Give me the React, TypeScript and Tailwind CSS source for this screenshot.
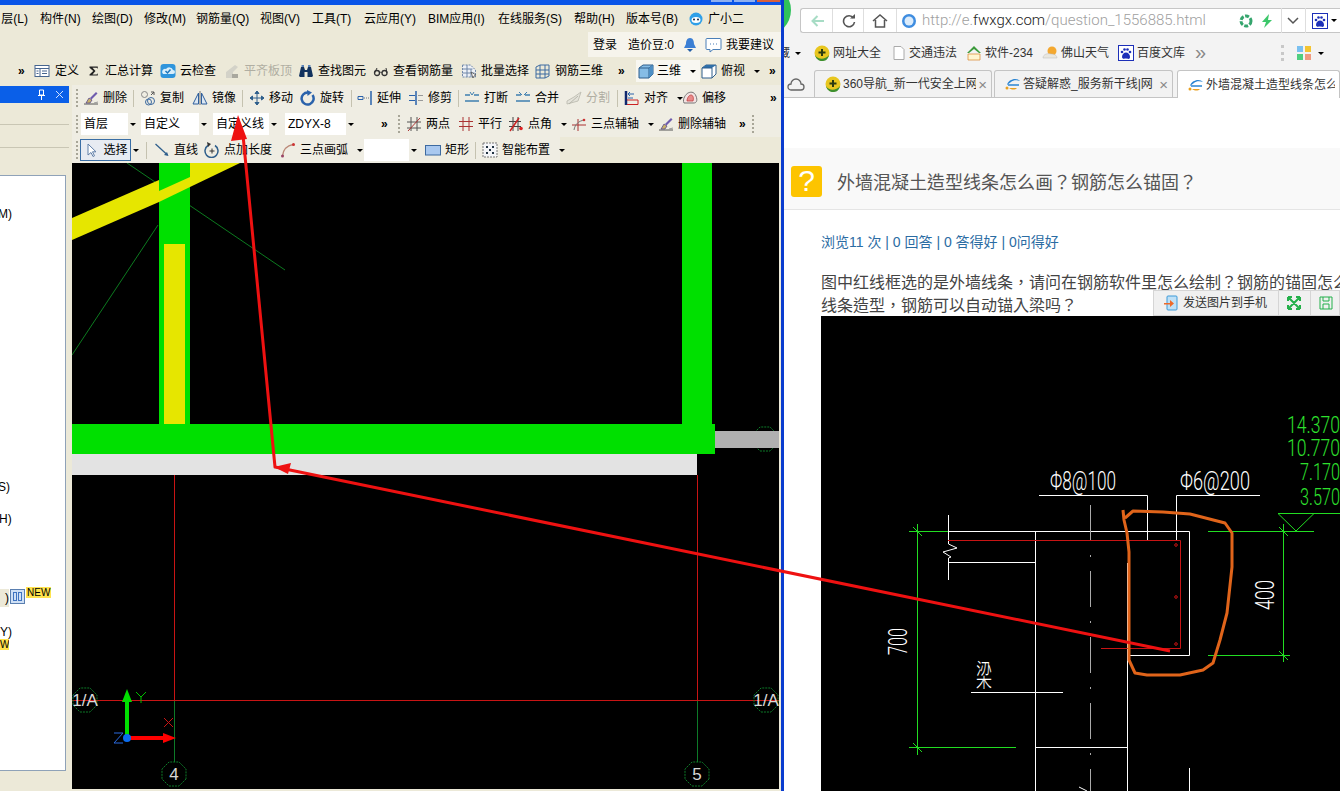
import React from "react";

const Ico = ({ children, size = 16 }: { children: React.ReactNode; size?: number }) => (
  <svg width={size} height={size} viewBox="0 0 16 16" fill="none" className="shrink-0">
    {children}
  </svg>
);

const Caret = ({ className = "" }: { className?: string }) => (
  <span className={`inline-block w-0 h-0 shrink-0 border-x-[3px] border-x-transparent border-t-[3px] border-t-black ${className}`}></span>
);

const More = ({ className = "" }: { className?: string }) => (
  <span className={`shrink-0 text-[12px] leading-none font-bold text-black ${className}`}>»</span>
);

const Grip = ({ className = "" }: { className?: string }) => (
  <span className={`shrink-0 w-[2px] h-[18px] border-l-2 border-dotted border-[#a8a698] ${className}`}></span>
);

const Sep = ({ className = "" }: { className?: string }) => (
  <span className={`shrink-0 w-px h-[17px] bg-[#c5c2b0] ${className}`}></span>
);

type ToolProps = {
  className: string;
  icon?: React.ReactNode;
  label: string;
  off?: boolean;
  caret?: boolean;
};

const Tool = ({ className, icon, label, off, caret }: ToolProps) => (
  <div className={`flex items-center shrink-0 gap-[4px] ${className}`}>
    {icon}
    <span className={off ? "text-[#b0aea2]" : "text-black"}>{label}</span>
    {caret && <Caret className="ml-[5px]" />}
  </div>
);

const Combo = ({ className, label }: { className: string; label: string }) => (
  <div className={`flex items-center justify-between shrink-0 h-[22px] ${className}`}>
    <span className="flex-1 h-full bg-white pl-[3px] flex items-center">{label}</span>
    <span className="w-[10px] flex justify-center">
      <Caret />
    </span>
  </div>
);

const icons = {
  define: (
    <Ico>
      <rect x="1" y="2.5" width="14" height="11" fill="#fff" stroke="#46658f" />
      <path d="M1 5.5h14M6 5.5v8M2.5 8h2M2.5 10.500h2M8 8h5M8 10.500h5" stroke="#46658f" />
    </Ico>
  ),
  sigma: (
    <Ico size={12}>
      <path d="M2 2h11v3L11.500 3.500H6l4 4.500-4 4.500h5.500L13 11v3H2v-1.500L7 8 2 3.500z" fill="#222" />
    </Ico>
  ),
  cloud: (
    <Ico>
      <rect x="0.500" y="1" width="15" height="14" rx="3" fill="#2f95dc" />
      <path d="M3 11h10a2 2 0 0 0 0-4 4 4 0 0 0-7-1 3 3 0 0 0-3 5z" fill="#d8eefb" />
      <path d="M5.500 8l2 2 3-3.500" stroke="#1f78bd" strokeWidth="1.500" />
    </Ico>
  ),
  flatTop: (
    <Ico>
      <path d="M2 15V9l9-7 3 2-5 5v6z" fill="#d3d2c8" />
      <path d="M8 15v-4h6v4z" fill="#a9a89e" />
    </Ico>
  ),
  binocular: (
    <Ico>
      <path d="M1 13l2-9h3l1 3h2l1-3h3l2 9-1 1H9.500V9h-3v5H2z" fill="#12325e" />
      <rect x="3.500" y="2" width="2.500" height="2" fill="#5a83b8" />
      <rect x="10" y="2" width="2.500" height="2" fill="#5a83b8" />
    </Ico>
  ),
  glasses: (
    <Ico>
      <circle cx="4" cy="10" r="2.500" stroke="#333" strokeWidth="1.300" />
      <circle cx="11.500" cy="10" r="2.500" stroke="#333" strokeWidth="1.300" />
      <path d="M6.500 10c1-1 1.500-1 2.500 0M1.500 10L4 5M14 10l-1-5" stroke="#333" />
    </Ico>
  ),
  batch: (
    <Ico>
      <path d="M1.500 2h8l5 5v7h-13z" fill="#eef1f6" stroke="#6f86a8" strokeDasharray="2 1" />
      <path d="M1.500 6h10M1.500 10h12M6 2v12M10 6v8" stroke="#6f86a8" />
      <path d="M10 9l5 3-2 1-1 2z" fill="#f4f4f4" stroke="#444" strokeWidth="0.700" />
    </Ico>
  ),
  rebar3d: (
    <Ico>
      <path d="M1 4l4-2h9v11l-4 2H1z" stroke="#3d6aa0" />
      <path d="M1 7h13M1 11h13M5 2v13M10 2v13" stroke="#3d6aa0" />
    </Ico>
  ),
  cube: (
    <Ico>
      <path d="M1 5l4-3h10v9l-4 4H1z" fill="#86bde6" stroke="#2f5f8c" />
      <path d="M1 5h10v10M11 5l4-3" stroke="#2f5f8c" />
      <path d="M11 5l4-3v9l-4 4z" fill="#4e8fc4" />
    </Ico>
  ),
  topView: (
    <Ico>
      <path d="M1 5l4-3h10v9l-4 4H1z" fill="#fff" stroke="#2f5f8c" />
      <path d="M1 5l4-3h10l-4 3z" fill="#2f6fa8" />
      <path d="M11 5v10M11 5H1" stroke="#2f5f8c" />
    </Ico>
  ),
  erase: (
    <Ico>
      <path d="M1 14h14" stroke="#555" />
      <path d="M3 13l3-5 3 2-2 3z" fill="#c9b26a" stroke="#4a3a8a" strokeWidth="0.700" />
      <path d="M7 8l6-6 1.500 1.500-6 6z" fill="#6f5cae" />
      <path d="M11 13l4-1" stroke="#999" />
    </Ico>
  ),
  copy: (
    <Ico>
      <circle cx="4.500" cy="4.500" r="3" stroke="#888" />
      <circle cx="11" cy="11" r="3.500" stroke="#3d6aa0" />
      <circle cx="8.500" cy="12" r="3" stroke="#3d6aa0" />
      <path d="M11 2l3 0v3M14 2l-3 3" stroke="#555" />
    </Ico>
  ),
  mirror: (
    <Ico>
      <path d="M8 1v14" stroke="#777" />
      <path d="M6.500 3v11H1zM9.500 3v11H15z" fill="#dce7f3" stroke="#2f5f9c" />
    </Ico>
  ),
  move: (
    <Ico>
      <path d="M8 1v14M1 8h14M8 1L6 3.500h4zM8 15l-2-2.500h4zM1 8l2.500-2v4zM15 8l-2.500-2v4z" stroke="#2f5f8c" fill="#2f5f8c" />
    </Ico>
  ),
  rotate: (
    <Ico>
      <path d="M12.500 5A6 6 0 1 1 8 2.500" stroke="#2a62ab" strokeWidth="2.500" />
      <path d="M7 0l5 2.500L7.500 6z" fill="#2a62ab" />
    </Ico>
  ),
  extend: (
    <Ico>
      <path d="M14 1v14" stroke="#2a62ab" strokeWidth="1.500" />
      <path d="M1 6.500h5v3H1z" stroke="#2a62ab" />
      <path d="M7 8h6" stroke="#777" strokeDasharray="1 1" />
    </Ico>
  ),
  trim: (
    <Ico>
      <path d="M8 1v14" stroke="#2a62ab" strokeWidth="1.500" />
      <path d="M1 5.500h6M1 10.500h6" stroke="#2a62ab" />
      <path d="M10 5.500h5M10 10.500h5" stroke="#999" />
    </Ico>
  ),
  split: (
    <Ico>
      <path d="M1 5h5M10 5h5M1 11h14" stroke="#3f7fb0" strokeWidth="1.500" />
      <path d="M6 2l2 3 2-3" stroke="#3f7fb0" />
    </Ico>
  ),
  merge: (
    <Ico>
      <path d="M1 5h5M10 5h5M1 11h14" stroke="#3f7fb0" strokeWidth="1.500" />
      <path d="M4 2l3 3M12 2L9 5" stroke="#3f7fb0" />
    </Ico>
  ),
  cut: (
    <Ico>
      <path d="M1 14l11-3 3-9-7 5-7 4z" stroke="#c2c1b6" fill="#e4e3da" />
      <path d="M3 14l9-8" stroke="#b8b7ac" />
    </Ico>
  ),
  align: (
    <Ico>
      <path d="M2 1v14" stroke="#10286e" strokeWidth="2.500" />
      <path d="M3 14.500h11V10H3" stroke="#c22" />
      <path d="M10 4H4l2-2M4 4l2 2M4 8h5" stroke="#2a62ab" />
    </Ico>
  ),
  offset: (
    <Ico>
      <path d="M2 13c-2-4 2-9 4-10s6-2 8 3 0 7-2 7z" fill="#f2e2e2" stroke="#777" />
      <path d="M5 11c0-3 2-6 4-6s3 3 2 6z" fill="#e88a8a" stroke="#b33" strokeWidth="0.700" />
    </Ico>
  ),
  twoPoint: (
    <Ico>
      <path d="M1 6h14M1 12h14" stroke="#555" />
      <path d="M5 1v14M11 1v14" stroke="#555" />
      <path d="M2 15L14 2" stroke="#a33" />
    </Ico>
  ),
  parallel: (
    <Ico>
      <path d="M1 5.500h14M1 10.500h14M5 1v14M11 1v14" stroke="#a33" />
    </Ico>
  ),
  angle: (
    <Ico>
      <path d="M1 5.500h12M1 10.500h12M5 1v14M10 1v14" stroke="#444" />
      <path d="M2 15L11 2" stroke="#c22" strokeWidth="1.500" />
      <circle cx="13" cy="12.500" r="1.800" fill="#d22" />
    </Ico>
  ),
  threePoint: (
    <Ico>
      <path d="M1 9h14M7 3v12" stroke="#a33" />
      <path d="M3 14c1-6 5-9 10-10" stroke="#777" />
      <circle cx="13" cy="4" r="1.300" fill="#c33" />
    </Ico>
  ),
  select: (
    <Ico>
      <path d="M5 2v11l3-2.500 2 4 1.500-.7-2-4H13z" fill="#fff" stroke="#5f7ea8" />
    </Ico>
  ),
  line: (
    <Ico>
      <path d="M1.500 2l12 11" stroke="#2f5f8c" strokeWidth="1.300" />
      <path d="M14.500 14L10 13l3-3z" fill="#2f5f8c" />
    </Ico>
  ),
  pointLength: (
    <Ico>
      <path d="M4 3.500a6.500 6.500 0 1 0 7 0" stroke="#2f5f8c" strokeWidth="1.500" />
      <path d="M3 0l4 2-3 3z" fill="#333" />
      <path d="M8 6.500v5M5.500 9h5" stroke="#333" />
    </Ico>
  ),
  arc: (
    <Ico>
      <path d="M2.500 14C3 8 7 3.500 13 2.500" stroke="#b87" strokeWidth="1.500" />
      <circle cx="2.500" cy="14" r="1.500" fill="#946" />
      <circle cx="13.500" cy="2.500" r="1.500" fill="#c33" />
    </Ico>
  ),
  rect: (
    <Ico>
      <rect x="0.500" y="3.500" width="15" height="9.500" fill="#a9c8ef" stroke="#3d6aa0" />
    </Ico>
  ),
  smart: (
    <Ico>
      <rect x="1" y="1" width="14" height="14" fill="#f4f5f8" stroke="#777" strokeDasharray="2 1" />
      <path d="M4 4h2v2H4zM10 4h2v2h-2zM7 7h2v2H7zM4 10h2v2H4zM10 10h2v2h-2z" fill="#234" />
    </Ico>
  ),
};

const Bao = ({ size = 16 }: { size?: number }) => (
  <Ico size={size}>
    <rect x="0.500" y="0.500" width="15" height="15" fill="#fff" stroke="#1d2fb8" />
    <path d="M4 12c0-3 2-4.500 4-4.500s4 1.500 4 4.500-3 1.500-4 1.500-4 1-4-1.500z" fill="#1d2fb8" />
    <circle cx="4" cy="7" r="1.300" fill="#1d2fb8" />
    <circle cx="6.500" cy="4.500" r="1.300" fill="#1d2fb8" />
    <circle cx="9.500" cy="4.500" r="1.300" fill="#1d2fb8" />
    <circle cx="12" cy="7" r="1.300" fill="#1d2fb8" />
  </Ico>
);

const Nav360 = () => (
  <Ico>
    <circle cx="8" cy="8" r="7.500" fill="#e8c61f" />
    <path d="M1 10c3 5 10 5 14 0-1 5-4 6-7 6s-6-2-7-6z" fill="#3d8f2e" />
    <path d="M8 4v7M4.500 7.500h7" stroke="#2a3a10" strokeWidth="2" />
  </Ico>
);

const Ie = () => (
  <Ico>
    <path d="M2 9c1-6 10-8 13-4-3-1-7-1-9 1z" fill="#2a84d2" />
    <path d="M4 12h8c-2 2-5 2-8 0z" fill="#e8a020" />
    <path d="M3 9h11" stroke="#2a84d2" strokeWidth="1.500" />
    <circle cx="2" cy="12" r="1.500" fill="#e8a020" />
  </Ico>
);

const Bookmark = ({ className, icon, label }: { className: string; icon: React.ReactNode; label: string }) => (
  <div className={`flex items-center shrink-0 gap-[3px] ${className}`}>
    {icon}
    <span>{label}</span>
  </div>
);

const Tab = ({ className, label, active }: { className: string; label: string; active?: boolean }) => (
  <div
    className={`flex items-center shrink-0 pl-[10px] pr-[4px] gap-[2px] border border-b-0 border-[#c4c4c4] rounded-t-[3px] overflow-hidden ${
      active ? "bg-white h-[28px]" : "bg-[#f2f2f2] h-[27px]"
    } ${className}`}
  >
    {label.startsWith("360") ? <Nav360 /> : <Ie />}
    <span className="flex-1 overflow-hidden leading-[16px] text-[#333]">{label}</span>
    {!active && <span className="text-[#888] text-[15px] leading-none">×</span>}
  </div>
);

const Bubble = ({ x, y, label, size = 17 }: { x: number; y: number; label: string; size?: number }) => {
  const pts = Array.from({ length: 8 }, (_, i) => {
    const a = (Math.PI / 4) * i + Math.PI / 8;
    return `${x + 13 * Math.cos(a)},${y + 13 * Math.sin(a)}`;
  }).join(" ");
  return (
    <g>
      <polygon points={pts} stroke="#0d7a28" fill="none" strokeWidth="1" strokeDasharray="2 1" />
      <text x={x} y={y + 6} textAnchor="middle" fontSize={size} fill="#d8d8d8" fontFamily="Liberation Sans">
        {label}
      </text>
    </g>
  );
};

const CadLeft = () => (
  <svg className="block w-full h-full" viewBox="72 163 707 626">
    <rect x="72" y="163" width="707" height="626" fill="#000" />
    <path d="M127 163L285 270M158 225L72 355" stroke="#0c7a1f" strokeWidth="1" />
    <rect x="159" y="163" width="31" height="261" fill="#00e000" />
    <polygon points="72,218 159,180 159,202 72,240" fill="#e6e600" />
    <polygon points="159,191 190,177 190,187 159,202" fill="#e6e600" />
    <polygon points="190,163 240,163 190,187" fill="#e6e600" />
    <rect x="164" y="244" width="21" height="180" fill="#e6e600" />
    <rect x="682" y="163" width="30" height="261" fill="#00e000" />
    <rect x="72" y="424" width="643" height="30" fill="#00e000" />
    <Bubble x={765} y={439} label="" />
    <rect x="715" y="431" width="64" height="17" fill="#b0b0b0" />
    <rect x="72" y="454" width="625" height="21" fill="#e3e3e3" />
    <path d="M174.500 475V700M697.500 475V700M72 700.500H779" stroke="#c81414" strokeWidth="1" />
    <path d="M174.500 701V762M697.500 701V762" stroke="#0d7a28" strokeWidth="1" />
    <Bubble x={85} y={700} label="1/A" />
    <Bubble x={766} y={700} label="1/A" />
    <Bubble x={174} y={774} label="4" />
    <Bubble x={697} y={774} label="5" />
    <path d="M127 737V700" stroke="#00e000" strokeWidth="4" />
    <polygon points="127,689 122,702 132,702" fill="#00e000" />
    <path d="M127 738H165" stroke="#f00" strokeWidth="4" />
    <polygon points="176,738 163,733 163,743" fill="#f00" />
    <circle cx="127" cy="738" r="4" fill="#0a6cf0" />
    <path d="M136 692l5 5 5-5M141 697v6" stroke="#00c000" />
    <path d="M164 718l9 9M173 718l-9 9" stroke="#c81414" />
    <path d="M114 733h9l-9 10h9" stroke="#2a6ae0" />
  </svg>
);

const CadRight = () => (
  <svg className="block w-full h-full" viewBox="821 316 519 475">
    <rect x="821" y="316" width="519" height="475" fill="#000" />
    <g stroke="#fff" strokeWidth="1" fill="none">
      <path d="M1039 495.500H1147.500V541M1176.500 541V495.500H1260" />
      <path d="M948 531.500H1189.500V655.500H1130" />
      <path d="M948.500 515V544L957 548L943 552L951 557L948.500 558V580" />
      <path d="M948 562.500H1035" />
      <path d="M1035.500 531V791M1127.500 563V791" />
      <path d="M1035 747.500H1127M971 692.500H1063" />
      <path d="M1189.500 768V791" />
      <path d="M1079 787l8 4" />
    </g>
    <path d="M1090.500 505V791" stroke="#aaa" strokeDasharray="36 14 2 14" />
    <path d="M948 540.500H1180.500V648.500H1101" stroke="#c81414" fill="none" />
    <g stroke="#c81414" fill="none">
      <circle cx="1176" cy="545" r="1.300" />
      <circle cx="1176" cy="597" r="1.300" />
      <circle cx="1176" cy="644" r="1.300" />
    </g>
    <g stroke="#22dd22" strokeWidth="1" fill="none">
      <path d="M909 531.500H948M917.500 524V755M909 747.500H1016" />
      <path d="M1208 531.500H1314M1283.500 524V662M1208 655.500H1290" />
      <path d="M1340 513.500H1278L1296 531L1314 513.500" />
      <path d="M913 527l9 9M913 743l9 9M1279 527l9 9M1279 651l9 9" />
    </g>
    <g fill="#fff" fontFamily="Roboto" fontWeight="300" fontSize="26">
      <text x="1050" y="490" textLength="66" lengthAdjust="spacingAndGlyphs">Φ8@100</text>
      <text x="1180" y="490" textLength="70" lengthAdjust="spacingAndGlyphs">Φ6@200</text>
      <text transform="translate(907 655) rotate(-90)" textLength="27" lengthAdjust="spacingAndGlyphs">700</text>
      <text transform="translate(1274 610) rotate(-90)" textLength="30" lengthAdjust="spacingAndGlyphs">400</text>
      <text x="976" y="686" fontSize="30" fontFamily="Noto Sans CJK SC" fontWeight="200" textLength="16" lengthAdjust="spacingAndGlyphs">梁</text>
    </g>
    <g fill="#2ee02e" fontFamily="Roboto" fontWeight="300" fontSize="24">
      <text x="1287" y="433" textLength="53" lengthAdjust="spacingAndGlyphs">14.370</text>
      <text x="1287" y="456" textLength="53" lengthAdjust="spacingAndGlyphs">10.770</text>
      <text x="1300" y="480" textLength="40" lengthAdjust="spacingAndGlyphs">7.170</text>
      <text x="1300" y="505" textLength="40" lengthAdjust="spacingAndGlyphs">3.570</text>
    </g>
    <polyline
      points="1123,510 1124,520 1127,533 1129,552 1129,660 1135,673 1147,675 1180,675 1203,670 1213,663 1220,640 1227,613 1232,567 1232,533 1225,523 1190,514 1163,512 1133,511 1125,518"
      fill="none"
      stroke="#e0641a"
      strokeWidth="3"
      strokeLinejoin="round"
    />
  </svg>
);

export default function App() {
  return (
    <div className="relative flex w-[1340px] h-[791px] overflow-hidden bg-white text-[12px] leading-none whitespace-nowrap text-black font-['Liberation_Sans','Noto_Sans_CJK_SC',sans-serif]">
      {/* left: the CAD program */}
      <div className="relative z-10 flex flex-col w-[784px] h-full shrink-0 bg-[#ece9d8] border-r-[3px] border-[#0a3ccf]">
        <div className="flex justify-end gap-[2px] h-[5px] pr-[1px] bg-[#0a55e8]">
          <span className="w-[21px] h-[2px] bg-[#8fb0f0]"></span>
          <span className="w-[21px] h-[2px] bg-[#8fb0f0]"></span>
          <span className="w-[23px] h-[2px] bg-[#d8603c]"></span>
        </div>

        <div className="flex items-center h-[27px] gap-[12px] -ml-[12px] shrink-0">
          <span className="w-[40px] text-right">层(L)</span>
          <span className="w-[40px]">构件(N)</span>
          <span className="w-[40px]">绘图(D)</span>
          <span className="w-[40px]">修改(M)</span>
          <span className="w-[52px]">钢筋量(Q)</span>
          <span className="w-[40px]">视图(V)</span>
          <span className="w-[40px]">工具(T)</span>
          <span className="w-[52px]">云应用(Y)</span>
          <span className="w-[58px]">BIM应用(I)</span>
          <span className="w-[64px]">在线服务(S)</span>
          <span className="w-[40px]">帮助(H)</span>
          <span className="w-[52px]">版本号(B)</span>
          <div className="flex items-center gap-[4px] -ml-[2px]">
            <Ico>
              <circle cx="8" cy="8" r="6.500" fill="#2f9fe8" />
              <ellipse cx="8" cy="9" rx="4.500" ry="3" fill="#fff" />
              <circle cx="6" cy="8.500" r="1" fill="#124" />
              <circle cx="10" cy="8.500" r="1" fill="#124" />
            </Ico>
            <span>广小二</span>
          </div>
        </div>

        <div className="flex justify-end h-[25px] shrink-0">
          <div className="flex items-center w-[193px] bg-[#f6f4ec] pl-[5px]">
            <span>登录</span>
            <span className="ml-[11px]">造价豆:0</span>
            <svg width="14" height="16" viewBox="0 0 14 16" className="ml-[9px] shrink-0">
              <path d="M7 1c3 0 4 3 4 6l2 4H1l2-4c0-3 1-6 4-6z" fill="#3b7fd4" />
              <path d="M4 12h6l-3 3z" fill="#225ea8" />
            </svg>
            <svg width="17" height="16" viewBox="0 0 17 16" fill="none" className="ml-[8px] shrink-0">
              <path d="M2 1.500h13a1 1 0 0 1 1 1v9a1 1 0 0 1-1 1H8l-3 2.500v-2.500H2a1 1 0 0 1-1-1v-9a1 1 0 0 1 1-1z" stroke="#4a7fb8" fill="#fff" />
              <path d="M5 7h1M8 7h1M11 7h1" stroke="#4a7fb8" />
            </svg>
            <span className="ml-[4px]">我要建议</span>
          </div>
        </div>

        <div className="flex items-center h-[28px] pl-[18px] shrink-0">
          <More className="w-[16px]" />
          <Tool className="w-[54px] gap-[5px]" icon={icons.define} label="定义" />
          <Tool className="w-[72px] gap-[5px]" icon={icons.sigma} label="汇总计算" />
          <Tool className="w-[64px]" icon={icons.cloud} label="云检查" />
          <Tool className="w-[74px]" icon={icons.flatTop} label="平齐板顶" off />
          <Tool className="w-[75px]" icon={icons.binocular} label="查找图元" />
          <Tool className="w-[88px]" icon={icons.glasses} label="查看钢筋量" />
          <Tool className="w-[74px]" icon={icons.batch} label="批量选择" />
          <Tool className="w-[83px]" icon={icons.rebar3d} label="钢筋三维" />
          <More className="w-[18px]" />
          <div className="flex items-center w-[64px] h-[22px] shrink-0 bg-[#f8f7f1] pl-[2px] gap-[3px]">
            {icons.cube}
            <span>三维</span>
            <Caret className="ml-[6px]" />
          </div>
          <Tool className="w-[68px] ml-[1px]" icon={icons.topView} label="俯视" caret />
          <More />
        </div>

        <div className="flex flex-1 min-h-0">
          {/* side panel */}
          <div className="flex flex-col w-[72px] shrink-0 pr-[3px]">
            <div className="flex items-center justify-end gap-[9px] h-[17px] mt-[1px] pr-[5px] bg-[#0a5fe8] text-white">
              <svg width="9" height="11" viewBox="0 0 9 11" fill="none">
                <path d="M2.500 1h4v5h-4zM1 6.500h7M4.500 6.500V11" stroke="#fff" />
              </svg>
              <svg width="9" height="9" viewBox="0 0 9 9" fill="none">
                <path d="M1 1l7 7M8 1L1 8" stroke="#cfe0ff" />
              </svg>
            </div>
            <div className="h-[22px] border-b border-[#c9c6b4]"></div>
            <div className="h-[23px] border-b border-[#c9c6b4]"></div>
            <div className="h-[27px]"></div>
            <div className="flex flex-col w-[66px] h-[596px] bg-white border border-l-0 border-[#8fa2b8] overflow-hidden">
              <span className="h-4 mt-[32px] -ml-[2px]">M)</span>
              <span className="h-4 mt-[257px] -ml-[2px]">S)</span>
              <span className="h-4 mt-[16px] -ml-[1px]">H)</span>
              <div className="flex items-start h-[18px] mt-[60px]">
                <span className="w-[9px] pt-[3px] text-right bg-[#ece9d8] h-full">)</span>
                <span className="flex w-[15px] h-[15px] ml-[1px] bg-[#cfe0f5] border border-[#5a7fb0] p-[2px] gap-[1px]">
                  <i className="flex-1 border border-[#3f74c0]"></i>
                  <i className="flex-1 border border-[#3f74c0]"></i>
                </span>
                <span className="ml-[1px] -mt-[2px] px-[1px] h-[11px] bg-[#ffe34d] text-[10px] leading-[11px]">NEW</span>
              </div>
              <span className="h-[13px] mt-[19px]">Y)</span>
              <span className="w-[9px] h-[11px] bg-[#ffe34d] text-[10px] leading-[11px] overflow-hidden">W</span>
            </div>
          </div>

          {/* drawing toolbars and canvas */}
          <div className="flex flex-col flex-1 min-w-0">
            <div className="flex items-center h-[26px] pl-[4px] shrink-0 bg-[#efede3]">
              <Grip className="mr-[5px]" />
              <Tool className="w-[51px]" icon={icons.erase} label="删除" />
              <Sep className="-ml-[1px] mr-[6px]" />
              <Tool className="w-[52px]" icon={icons.copy} label="复制" />
              <Tool className="w-[50px]" icon={icons.mirror} label="镜像" />
              <Sep className="mr-[6px]" />
              <Tool className="w-[51px]" icon={icons.move} label="移动" />
              <Tool className="w-[51px]" icon={icons.rotate} label="旋转" />
              <Sep className="mr-[5px]" />
              <Tool className="w-[51px]" icon={icons.extend} label="延伸" />
              <Tool className="w-[50px]" icon={icons.trim} label="修剪" />
              <Sep className="mr-[5px]" />
              <Tool className="w-[51px]" icon={icons.split} label="打断" />
              <Tool className="w-[51px]" icon={icons.merge} label="合并" />
              <Tool className="w-[51px]" icon={icons.cut} label="分割" off />
              <Sep className="mr-[6px]" />
              <Tool className="w-[58px]" icon={icons.align} label="对齐" caret />
              <Tool className="w-[88px]" icon={icons.offset} label="偏移" />
              <More />
            </div>

            <div className="flex items-center h-[26px] pl-[4px] shrink-0 bg-[#efede3]">
              <Grip className="mr-[3px]" />
              <Combo className="w-[57px] mr-[3px]" label="首层" />
              <Combo className="w-[68px] mr-[4px]" label="自定义" />
              <Combo className="w-[66px] mr-[6px]" label="自定义线" />
              <Combo className="w-[71px]" label="ZDYX-8" />
              <More className="ml-[25px] w-[17px]" />
              <Grip className="mr-[6px]" />
              <Tool className="w-[52px]" icon={icons.twoPoint} label="两点" />
              <Tool className="w-[50px]" icon={icons.parallel} label="平行" />
              <Tool className="w-[63px]" icon={icons.angle} label="点角" caret />
              <Tool className="w-[87px]" icon={icons.threePoint} label="三点辅轴" caret />
              <Tool className="w-[81px]" icon={icons.erase} label="删除辅轴" />
              <More className="w-[13px]" />
              <Grip />
            </div>

            <div className="flex items-center w-[488px] h-[26px] pl-[4px] shrink-0 bg-[#efede3]">
              <Grip className="mr-[2px]" />
              <div className="flex items-center justify-center gap-[4px] w-[51px] h-[22px] shrink-0 bg-[#e7ebf2] border border-[#3a6ea5]">
                {icons.select}
                <span>选择</span>
              </div>
              <Caret className="ml-[2px] mr-[7px]" />
              <Sep className="mr-[7px]" />
              <Tool className="w-[50px]" icon={icons.line} label="直线" />
              <Tool className="w-[76px]" icon={icons.pointLength} label="点加长度" />
              <Tool className="w-[84px]" icon={icons.arc} label="三点画弧" caret />
              <Combo className="w-[55px] mr-[6px]" label="" />
              <Tool className="w-[50px]" icon={icons.rect} label="矩形" />
              <Sep className="mr-[6px]" />
              <Tool className="w-[80px]" icon={icons.smart} label="智能布置" caret />
            </div>

            <div className="flex-1 min-h-0 mr-[2px] mb-[2px]">
              <CadLeft />
            </div>
          </div>
        </div>
      </div>

      {/* right: the browser */}
      <div className="relative flex flex-col flex-1 min-w-0 text-[#333]">
        <span className="absolute -left-[45px] -top-[16px] w-[52px] h-[52px] rounded-full bg-[#2fc15b]"></span>
        <div className="bg-[#f3f3f3] h-[36px] pl-[16px] pt-[8px] shrink-0">
          <div className="relative flex items-center h-[25px] bg-white border border-r-0 border-[#c6c6c6] rounded-l-[3px]">
            <svg width="14" height="12" viewBox="0 0 14 12" fill="none" className="ml-[10px] shrink-0">
              <path d="M13 6H2M6.500 1L1.500 6l5 5" stroke="#a7dcc5" strokeWidth="2" />
            </svg>
            <span className="w-px h-full ml-[7px] bg-[#dedede]"></span>
            <svg width="14" height="14" viewBox="0 0 14 14" fill="none" className="ml-[9px] shrink-0">
              <path d="M11.500 4A5.500 5.500 0 1 0 12.500 8" stroke="#555" strokeWidth="1.600" />
              <path d="M8 4.500h5V0z" fill="#555" />
            </svg>
            <span className="w-px h-full ml-[7px] bg-[#dedede]"></span>
            <svg width="16" height="14" viewBox="0 0 16 14" fill="none" className="ml-[8px] shrink-0">
              <path d="M1 7l7-6 7 6M3.500 6v7h9V6" stroke="#555" strokeWidth="1.500" />
            </svg>
            <span className="w-px h-full ml-[8px] bg-[#dedede]"></span>
            <svg width="16" height="16" viewBox="0 0 16 16" fill="none" className="ml-[4px] shrink-0">
              <circle cx="8" cy="8" r="7" fill="#3f8de0" />
              <circle cx="8" cy="8" r="4.500" fill="#dcecfb" />
            </svg>
            <span className="ml-[5px] text-[15px] text-[#a0a0a0] font-['Roboto',sans-serif] font-light">
              http://e.<span className="text-[#222]">fwxgx.com</span>/question_1556885.html
            </span>
            <div className="flex items-center ml-auto">
              <svg width="14" height="14" viewBox="0 0 14 14" fill="none">
                <circle cx="7" cy="7" r="5" stroke="#35a56d" strokeWidth="3" strokeDasharray="4 1.500" />
              </svg>
              <svg width="12" height="14" viewBox="0 0 12 14" className="ml-[8px]">
                <path d="M8 0L1 8h4l-2 6 8-8H7z" fill="#3cc76a" />
              </svg>
              <span className="w-px h-[25px] ml-[8px] bg-[#dedede]"></span>
              <svg width="12" height="8" viewBox="0 0 12 8" fill="none" className="ml-[5px]">
                <path d="M1 1l5 5 5-5" stroke="#555" strokeWidth="1.500" />
              </svg>
              <span className="w-px h-[25px] ml-[6px] bg-[#dedede]"></span>
              <span className="ml-[6px]">
                <Bao />
              </span>
              <Caret className="ml-[3px] mr-[3px] border-t-[#888]" />
            </div>
          </div>
        </div>

        <div className="flex items-center h-[34px] bg-[#f3f3f3] shrink-0">
          <span className="w-[6px] overflow-hidden flex justify-end">藏</span>
          <Caret className="ml-[5px] mr-[13px] border-t-[#777]" />
          <Bookmark className="w-[79px]" icon={<Nav360 />} label="网址大全" />
          <Bookmark
            className="w-[73px]"
            icon={
              <svg width="12" height="14" viewBox="0 0 12 14" fill="none" className="mr-[1px]">
                <path d="M1 .500h7l3 3v10H1z" fill="#fff" stroke="#aaa" />
              </svg>
            }
            label="交通违法"
          />
          <Bookmark
            className="w-[76px]"
            icon={
              <Ico>
                <path d="M1 8l7-7 7 7h-2L8 4 3 8z" fill="#3a9a3a" />
                <path d="M2 15V9h12v6z" fill="#fff5d0" stroke="#d8842a" strokeWidth="0.700" />
              </Ico>
            }
            label="软件-234"
          />
          <Bookmark
            className="w-[76px]"
            icon={
              <Ico>
                <circle cx="10" cy="6" r="4.500" fill="#f4a830" />
                <path d="M1 13c0-4 5-5 8-4 3 0 6 1 6 4z" fill="#e9e7e0" stroke="#bbb" strokeWidth="0.500" />
              </Ico>
            }
            label="佛山天气"
          />
          <Bookmark className="w-[77px]" icon={<Bao />} label="百度文库" />
          <span className="text-[#888] text-[20px] leading-none -mt-[3px]">»</span>
          <span className="w-[3px] h-[16px] ml-[75px] border-l-[3px] border-dotted border-[#c8c8c8]"></span>
          <svg width="16" height="16" viewBox="0 0 16 16" className="ml-[12px] shrink-0">
            <rect x="1" y="1" width="6" height="6" fill="#7ac0f0" />
            <rect x="9" y="1" width="6" height="6" fill="#f4c430" />
            <rect x="1" y="9" width="6" height="6" fill="#4fcf80" />
            <rect x="9" y="9" width="6" height="6" fill="#f09a80" />
          </svg>
          <Caret className="ml-[6px] border-t-[#777]" />
        </div>

        <div className="flex items-end gap-[2px] h-[28px] bg-[#f3f3f3] border-b border-[#c4c4c4] shrink-0">
          <svg width="18" height="14" viewBox="0 0 18 14" fill="none" className="ml-[3px] mr-[7px] mb-[6px] shrink-0">
            <path d="M4 13a3 3 0 0 1 0-6 5 5 0 0 1 10 0 3 3 0 0 1 0 6z" stroke="#666" strokeWidth="1.300" />
          </svg>
          <Tab className="w-[178px]" label="360导航_新一代安全上网" />
          <Tab className="w-[179px]" label="答疑解惑_服务新干线|网" />
          <Tab className="w-[163px] ml-[2px] -mb-px pr-0" label="外墙混凝土造型线条怎么画？钢筋" active />
        </div>

        <div className="h-[50px] bg-white shrink-0"></div>

        <div className="flex items-center h-[62px] pl-[7px] pt-[5px] bg-[#f9f9f9] border-b border-[#e5e5e5] shrink-0">
          <div className="flex items-center justify-center w-[31px] h-[31px] bg-[#fdc400] rounded-[3px] text-white text-[30px] font-light">?</div>
          <span className="ml-[15px] text-[18px] text-[#555] font-['Noto_Sans_CJK_TC',sans-serif]">外墙混凝土造型线条怎么画？钢筋怎么锚固？</span>
        </div>

        <div className="flex flex-col flex-1 min-h-0 pl-[37px] bg-white">
          <p className="mt-[24px] h-[16px] text-[14px] leading-[16px] text-[#2b6ca3]">浏览11 次 | 0 回答 | 0 答得好 | 0问得好</p>
          <p className="mt-[20px] h-[23px] text-[16px] leading-[23px] text-[#444] font-['Noto_Sans_CJK_TC',sans-serif]">图中红线框选的是外墙线条，请问在钢筋软件里怎么绘制？钢筋的锚固怎么</p>
          <p className="h-[23px] text-[16px] leading-[23px] text-[#444] font-['Noto_Sans_CJK_TC',sans-serif]">线条造型，钢筋可以自动锚入梁吗？</p>
          <div className="relative flex-1 min-h-0">
            <CadRight />
            <div className="absolute right-0 -top-[26px] flex items-center w-[187px] h-[26px] bg-[#f0f0f0] border border-[#d5d5d5] text-[#333]">
              <svg width="14" height="16" viewBox="0 0 14 16" fill="none" className="ml-[10px] shrink-0">
                <rect x="3" y="1" width="10" height="14" rx="1" fill="#bfe0f6" stroke="#3d9ad8" />
                <path d="M0 8h6V5l4 3.500L6 12V9.500H0z" fill="#ee6a2a" />
              </svg>
              <span className="ml-[5px] w-[95px]">发送图片到手机</span>
              <span className="w-px h-full bg-[#d5d5d5]"></span>
              <svg width="14" height="14" viewBox="0 0 14 14" fill="none" className="ml-[8px] shrink-0">
                <path d="M1 1l12 12M13 1L1 13M1 1h4M1 1v4M13 1H9M13 1v4M1 13h4M1 13V9M13 13H9M13 13V9" stroke="#23b04a" strokeWidth="2" />
              </svg>
              <span className="w-px h-full ml-[9px] bg-[#d5d5d5]"></span>
              <svg width="14" height="14" viewBox="0 0 14 14" fill="none" className="ml-[8px] shrink-0">
                <path d="M1 1h12v12H1zM4 1v4h6V1M4 13V8h6v5" stroke="#23b04a" />
              </svg>
            </div>
          </div>
        </div>
      </div>

      {/* red annotation arrows lying over both windows */}
      <svg className="absolute inset-0 z-20 pointer-events-none" width="1340" height="791" viewBox="0 0 1340 791" fill="none">
        <path d="M1170 651L285 469L275 467L243 135" stroke="#ee1111" strokeWidth="3" strokeLinejoin="round" />
        <polygon points="238,115 231,141 247,139" fill="#ee1111" />
        <polygon points="274,467 291,463 288,474" fill="#ee1111" />
      </svg>
    </div>
  );
}
